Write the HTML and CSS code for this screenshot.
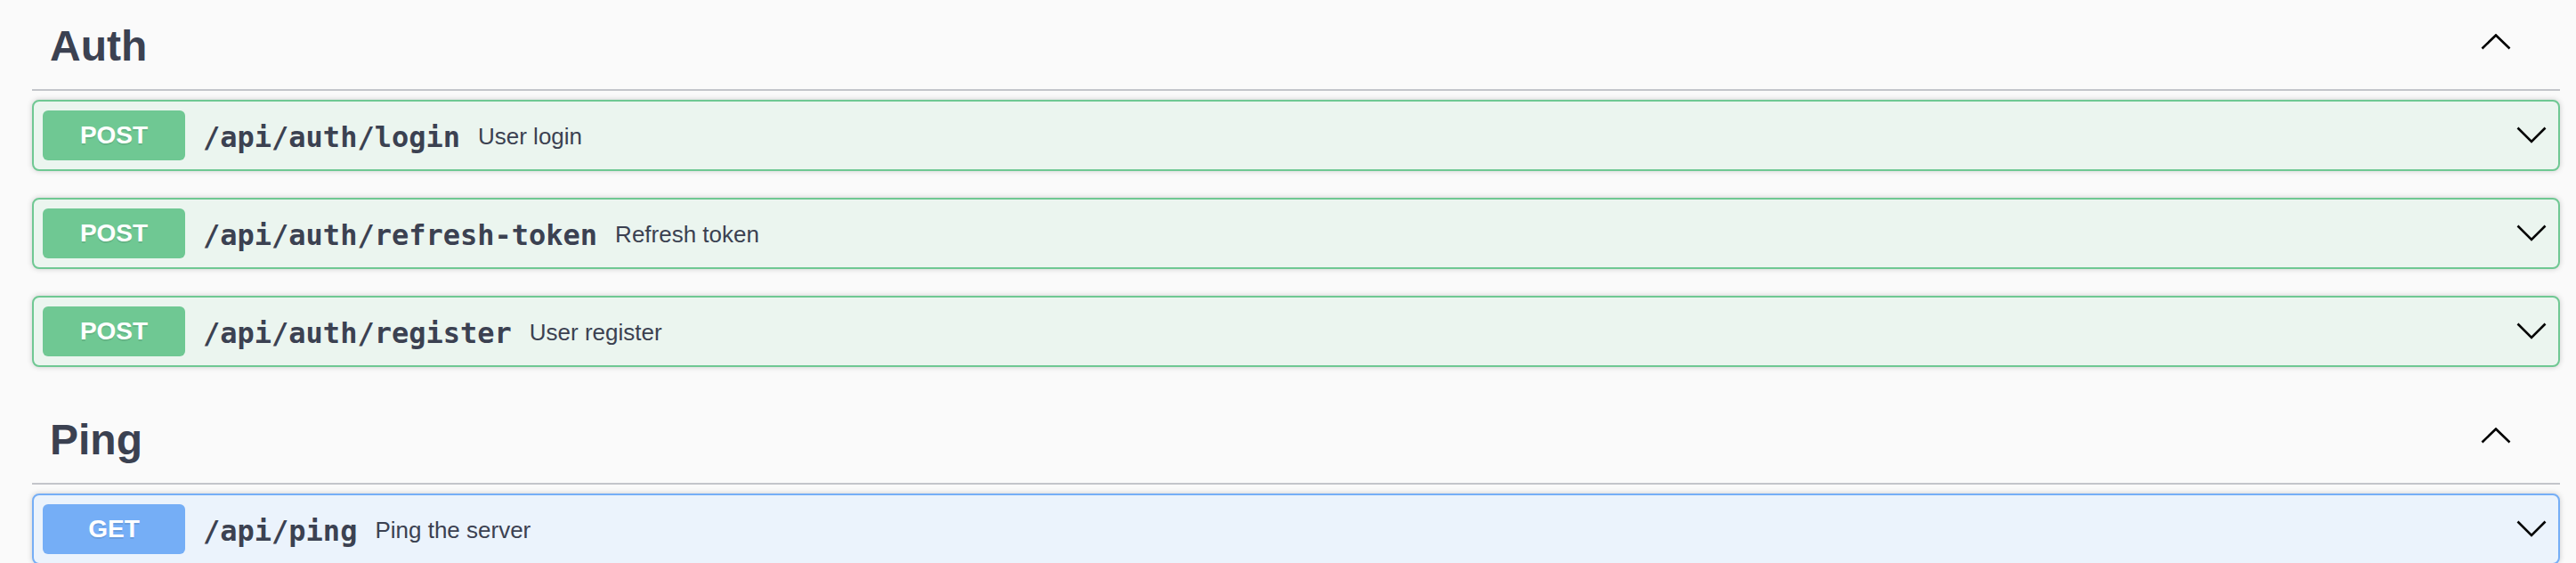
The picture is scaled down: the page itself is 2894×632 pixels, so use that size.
FILE: index.html
```html
<!DOCTYPE html>
<html lang="en">
<head>
<meta charset="utf-8">
<title>API</title>
<link rel="stylesheet" href="styles.css">
</head>
<body>
<div class="wrapper">
  <section class="tag-section">
    <h3 class="tag">
      <span class="tag-name">Auth</span>
      <svg class="tag-arrow" width="34" height="24" viewBox="0 0 34 24"><polyline points="1.5,16.5 17,1.5 32.5,16.5" fill="none" stroke="#000" stroke-width="2.6"/></svg>
    </h3>
    <div class="opblock post">
      <span class="method">POST</span>
      <span class="path">/api/auth/login</span>
      <span class="desc">User login</span>
      <svg class="op-arrow" width="34" height="20" viewBox="0 0 34 20"><polyline points="1.5,1.5 17,17 32.5,1.5" fill="none" stroke="#000" stroke-width="2.6"/></svg>
    </div>
    <div class="opblock post">
      <span class="method">POST</span>
      <span class="path">/api/auth/refresh-token</span>
      <span class="desc">Refresh token</span>
      <svg class="op-arrow" width="34" height="20" viewBox="0 0 34 20"><polyline points="1.5,1.5 17,17 32.5,1.5" fill="none" stroke="#000" stroke-width="2.6"/></svg>
    </div>
    <div class="opblock post">
      <span class="method">POST</span>
      <span class="path">/api/auth/register</span>
      <span class="desc">User register</span>
      <svg class="op-arrow" width="34" height="20" viewBox="0 0 34 20"><polyline points="1.5,1.5 17,17 32.5,1.5" fill="none" stroke="#000" stroke-width="2.6"/></svg>
    </div>
  </section>
  <section class="tag-section">
    <h3 class="tag">
      <span class="tag-name">Ping</span>
      <svg class="tag-arrow" width="34" height="24" viewBox="0 0 34 24"><polyline points="1.5,16.5 17,1.5 32.5,16.5" fill="none" stroke="#000" stroke-width="2.6"/></svg>
    </h3>
    <div class="opblock get">
      <span class="method">GET</span>
      <span class="path">/api/ping</span>
      <span class="desc">Ping the server</span>
      <svg class="op-arrow" width="34" height="20" viewBox="0 0 34 20"><polyline points="1.5,1.5 17,17 32.5,1.5" fill="none" stroke="#000" stroke-width="2.6"/></svg>
    </div>
  </section>
</div>
</body>
</html>
```
FILE: styles.css
```css
html, body {
  margin: 0;
  padding: 0;
  background: #fafafa;
  color: #3b4151;
  font-family: "Liberation Sans", Arial, sans-serif;
}

.wrapper {
  padding: 0 18px 0 36px;
}

.tag {
  display: flex;
  align-items: center;
  height: 100px;
  margin: 0 0 10px;
  padding: 0 55px 0 20px;
  border-bottom: 2px solid #c3c5ca;
  font-size: 48px;
  font-weight: bold;
  color: #3b4151;
}

.tag-name {
  flex: 1 1 auto;
  padding-top: 2px;
}

.tag-arrow {
  display: block;
  flex: none;
}

.opblock {
  display: flex;
  align-items: center;
  box-sizing: border-box;
  height: 80px;
  margin: 0 0 30px;
  padding: 0 13px 0 10px;
  border: 2px solid;
  border-radius: 8px;
  box-shadow: 0 0 6px rgba(0, 0, 0, 0.19);
}

.opblock.post {
  background: #ebf5ef;
  border-color: #6fc893;
}

.opblock.get {
  background: #ebf3fc;
  border-color: #75aef6;
}

.method {
  flex: none;
  box-sizing: border-box;
  width: 160px;
  height: 56px;
  line-height: 56px;
  border-radius: 6px;
  text-align: center;
  font-size: 28px;
  font-weight: bold;
  color: #fff;
  text-shadow: 0 2px 0 rgba(0, 0, 0, 0.1);
}

.post .method {
  background: #6fc893;
}

.get .method {
  background: #75aef6;
}

.path {
  flex: none;
  padding: 4px 20px 0 20px;
  font-family: "DejaVu Sans Mono", "Liberation Mono", monospace;
  font-size: 32px;
  font-weight: bold;
  color: #3b4151;
}

.desc {
  flex: 1 1 auto;
  padding-top: 2px;
  font-size: 26px;
  color: #3b4151;
}

.op-arrow {
  display: block;
  flex: none;
}
```
